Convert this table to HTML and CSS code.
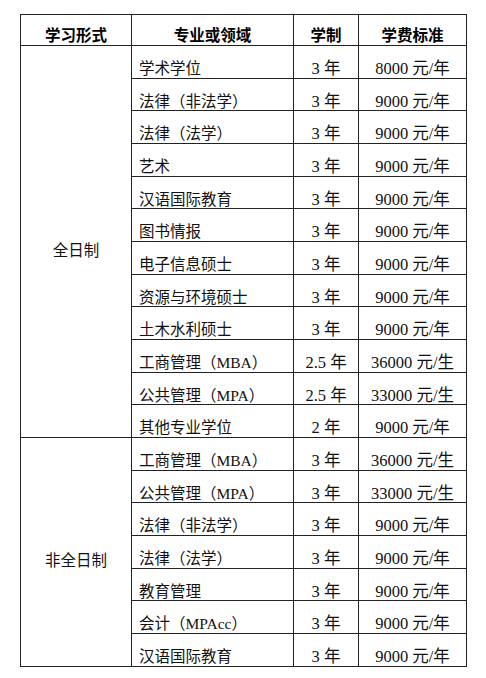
FILE: index.html
```html
<!DOCTYPE html>
<html lang="zh">
<head>
<meta charset="utf-8">
<link rel="stylesheet" href="styles.css">
</head>
<body>
<table class="fees">
  <colgroup>
    <col class="c1"><col class="c2"><col class="c3"><col class="c4">
  </colgroup>
  <thead>
    <tr><th>学习形式</th><th>专业或领域</th><th>学制</th><th>学费标准</th></tr>
  </thead>
  <tbody>
    <tr><td class="mode" rowspan="12">全日制</td><td class="major">学术学位</td><td class="num">3 年</td><td class="num">8000 元/年</td></tr>
    <tr><td class="major">法律（非法学）</td><td class="num">3 年</td><td class="num">9000 元/年</td></tr>
    <tr><td class="major">法律（法学）</td><td class="num">3 年</td><td class="num">9000 元/年</td></tr>
    <tr><td class="major">艺术</td><td class="num">3 年</td><td class="num">9000 元/年</td></tr>
    <tr><td class="major">汉语国际教育</td><td class="num">3 年</td><td class="num">9000 元/年</td></tr>
    <tr><td class="major">图书情报</td><td class="num">3 年</td><td class="num">9000 元/年</td></tr>
    <tr><td class="major">电子信息硕士</td><td class="num">3 年</td><td class="num">9000 元/年</td></tr>
    <tr><td class="major">资源与环境硕士</td><td class="num">3 年</td><td class="num">9000 元/年</td></tr>
    <tr><td class="major">土木水利硕士</td><td class="num">3 年</td><td class="num">9000 元/年</td></tr>
    <tr><td class="major">工商管理（MBA）</td><td class="num">2.5 年</td><td class="num">36000 元/生</td></tr>
    <tr><td class="major">公共管理（MPA）</td><td class="num">2.5 年</td><td class="num">33000 元/生</td></tr>
    <tr><td class="major">其他专业学位</td><td class="num">2 年</td><td class="num">9000 元/年</td></tr>
    <tr><td class="mode" rowspan="7">非全日制</td><td class="major">工商管理（MBA）</td><td class="num">3 年</td><td class="num">36000 元/生</td></tr>
    <tr><td class="major">公共管理（MPA）</td><td class="num">3 年</td><td class="num">33000 元/生</td></tr>
    <tr><td class="major">法律（非法学）</td><td class="num">3 年</td><td class="num">9000 元/年</td></tr>
    <tr><td class="major">法律（法学）</td><td class="num">3 年</td><td class="num">9000 元/年</td></tr>
    <tr><td class="major">教育管理</td><td class="num">3 年</td><td class="num">9000 元/年</td></tr>
    <tr><td class="major">会计（MPAcc）</td><td class="num">3 年</td><td class="num">9000 元/年</td></tr>
    <tr><td class="major">汉语国际教育</td><td class="num">3 年</td><td class="num">9000 元/年</td></tr>
  </tbody>
</table>
</body>
</html>
```

FILE: styles.css
```css
html, body {
  margin: 0;
  padding: 0;
  background: #fff;
}

body {
  padding: 14px 0 0 20px;
  font-family: "Liberation Serif", "Noto Sans CJK SC", serif;
  color: #111;
}

.fees {
  border-collapse: collapse;
  table-layout: fixed;
  width: 446px;
  border: 1px solid #333;
}

.c1 { width: 111px; }
.c2 { width: 162px; }
.c3 { width: 65px; }
.c4 { width: 108px; }

.fees th,
.fees td {
  border: 1px solid #222;
  padding: 0;
  font-size: 15.5px;
  line-height: 16px;
  white-space: nowrap;
}

.fees th {
  height: 31px;
  box-sizing: border-box;
  padding-top: 11px;
  vertical-align: top;
  text-align: center;
  font-family: "Noto Sans CJK SC", sans-serif;
  font-weight: 700;
  color: #000;
}

.fees td {
  height: 32.68px;
  box-sizing: border-box;
}

.fees .major {
  vertical-align: top;
  padding: 15px 0 0 7px;
  font-family: "Liberation Serif", "Noto Sans CJK SC", serif;
}

.fees .num {
  vertical-align: top;
  padding-top: 15px;
  text-align: center;
  font-size: 16.5px;
}

.fees .mode {
  vertical-align: middle;
  text-align: center;
  padding-top: 14px;
  font-family: "Noto Sans CJK SC", sans-serif;
}
```
